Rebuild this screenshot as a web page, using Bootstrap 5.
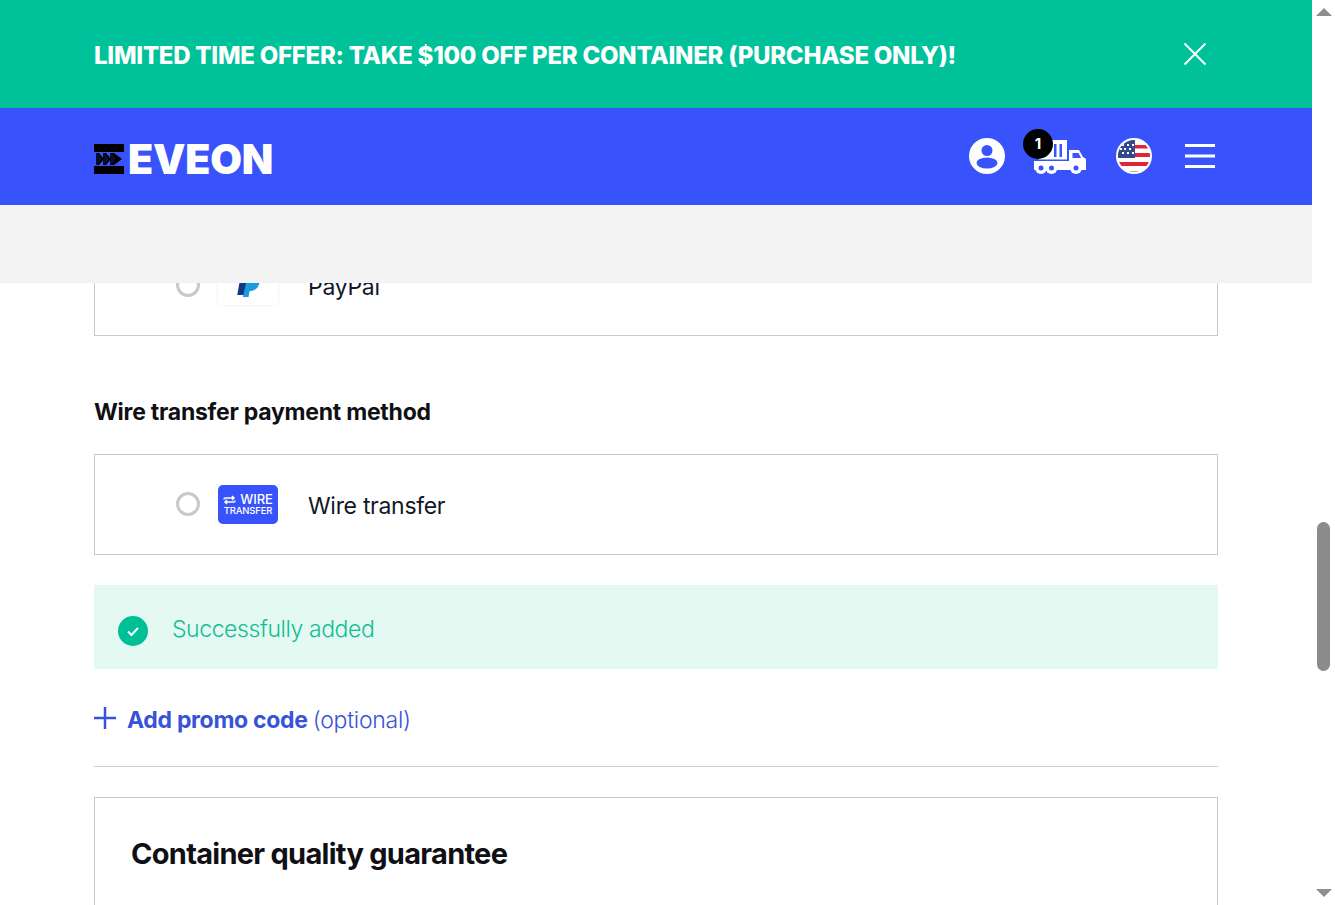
<!doctype html>
<html lang="en">
<head>
<meta charset="utf-8">
<title>Eveon checkout</title>
<link href="https://cdn.jsdelivr.net/npm/bootstrap@5.3.0/dist/css/bootstrap.min.css" rel="stylesheet">
<style>
html,body{height:905px;overflow:hidden;background:#fff;}
body{font-family:Inter,"Liberation Sans",sans-serif;color:#101014;}
.shell{width:1335px;height:905px;}
.viewport{width:1312px;height:905px;position:relative;overflow:hidden;}
.sitehead{position:absolute;top:0;left:0;right:0;z-index:5;}
.promo{height:108px;background:#00c29a;padding:0 105px 0 94px;}
.promo-text{font-size:24px;font-weight:800;letter-spacing:-.26px;color:#fff;margin-top:3px;}
.brandbar{height:97px;background:#3853fb;padding:0 97px 0 94px;}
.greybar{height:78px;background:#f3f3f3;}
.brand-group{margin-top:5px;}
.logo-word{font-size:41px;line-height:1;font-weight:900;letter-spacing:-.2px;color:#fff;margin-left:4px;}
.nav-icons{margin-top:-1px;}
.cart{position:relative;width:52px;height:36px;margin-left:29px;}
.cart-badge{position:absolute;left:-11px;top:-9px;width:30px;height:30px;border-radius:50%;background:#000;color:#fff;font-size:15px;font-weight:700;}
.flag{margin-left:30px;}
.burger{margin-left:33px;}
.content{padding:235px 94px 0;box-sizing:content-box;width:1124px;}
.paybox{height:101px;border:1px solid #c9c9c9;padding-left:81px;}
.radio-ring{width:24px;height:24px;border-radius:50%;border:3px solid #c9c9c9;margin-top:-2px;}
.logo-tile{width:60px;height:39px;border-radius:5px;margin-left:18px;}
.tile-paypal{background:#fff;box-shadow:0 0 3px rgba(0,0,0,.1);}
.tile-wire{background:#3853fb;color:#fff;line-height:1;}
.wire-top{font-size:13px;font-weight:500;letter-spacing:-.1px;}
.wire-bottom{font-size:9.5px;font-weight:500;letter-spacing:-.2px;margin-top:0;}
.method-name{font-size:23px;font-weight:400;letter-spacing:-.3px;margin-left:30px;margin-top:3px;color:#11182a;}
.method-heading{font-size:23px;font-weight:700;letter-spacing:-.25px;margin:62px 0 0;height:56px;line-height:28px;}
.success-box{height:84px;background:#e3f9f2;margin-top:30px;padding-left:24px;}
.success-icon{margin-top:7px;}
.success-text{font-size:23px;font-weight:300;letter-spacing:-.42px;color:#14bd96;margin-left:24px;margin-top:4px;}
.promo-row{height:98px;margin:0;border-bottom:1px solid #cfcfcf;padding-top:5px;color:#3853d8;}
.promo-plus{margin-top:-4px;}
.promo-strong{font-size:23px;font-weight:700;letter-spacing:-.3px;margin-left:11px;}
.promo-light{font-size:23px;font-weight:300;letter-spacing:-.25px;margin-left:5px;}
.guarantee{border:1px solid #c9c9c9;margin-top:30px;height:200px;padding:36px;}
.guarantee-title{font-size:29px;font-weight:700;letter-spacing:-.72px;line-height:40px;margin:0;}
.railbar{width:23px;height:905px;background:#fff;position:relative;}
.rail-thumb{position:absolute;left:5px;top:522px;width:13px;height:149px;border-radius:7px;background:#8b8b8b;}
.rail-up,.rail-down{position:absolute;left:4px;width:0;height:0;border-left:8px solid transparent;border-right:8px solid transparent;}
.rail-up{top:8px;border-bottom:8px solid #8e8e8e;}
.rail-down{bottom:8px;border-top:8px solid #8e8e8e;}
</style>
</head>
<body>
<div class="shell d-flex">
  <div class="viewport">
    <header class="sitehead">
      <div class="promo d-flex align-items-center justify-content-between">
        <div class="promo-text">LIMITED TIME OFFER: TAKE $100 OFF PER CONTAINER (PURCHASE ONLY)!</div>
        <svg width="24" height="24" viewBox="0 0 24 24" fill="none" stroke="#fff" stroke-width="2" aria-label="Close"><path d="M1.500 1.500 22.500 22.500M22.500 1.500 1.500 22.500"/></svg>
      </div>
      <nav class="brandbar d-flex align-items-center justify-content-between">
        <div class="brand-group d-flex align-items-center">
          <svg width="30" height="30" viewBox="0 0 30 30" aria-hidden="true">
            <rect width="30" height="30" fill="#000"/>
            <path fill="#3853fb" d="M0 8H30V22H0Z"/>
            <path fill="#000" d="M2 9H5L10 15 5 21H2L7 15ZM9 9H12L17 15 12 21H9L14 15ZM16 9H20L28 15 20 21H16L21 15Z"/>
            <path fill="#000" d="M2 9 7 15 2 21ZM9 9 14 15 9 21ZM16 9 21 15 16 21Z" opacity=".85"/>
          </svg>
          <span class="logo-word">EVEON</span>
        </div>
        <div class="nav-icons d-flex align-items-center">
          <svg width="36" height="36" viewBox="0 0 36 36" aria-label="Account"><circle cx="18" cy="18" r="18" fill="#fff"/><circle cx="18" cy="12.500" r="5.500" fill="#3853fb"/><ellipse cx="18" cy="25" rx="10.500" ry="5.500" fill="#3853fb"/></svg>
          <div class="cart">
            <svg width="52" height="36" viewBox="0 0 52 36" aria-hidden="true">
              <path fill="#fff" d="M5 2H33V24H5Z"/>
              <path fill="#3853fb" d="M20 6h2.500v13H20zM25.500 6H28v13h-2.500z"/>
              <path fill="#3853fb" d="M5 21.500H33V23H5Z"/>
              <path fill="#fff" d="M35 12H45L49 19 52 21V32H1Q0 32 0 31V23H35Z"/>
              <path fill="#3853fb" d="M38.500 15H44.500L47 20H38.500Z"/>
              <circle cx="7" cy="30" r="6" fill="#fff"/><circle cx="17.500" cy="30" r="6" fill="#fff"/><circle cx="42" cy="30" r="6" fill="#fff"/>
              <circle cx="7" cy="30" r="2.500" fill="#3853fb"/><circle cx="17.500" cy="30" r="2.500" fill="#3853fb"/><circle cx="42" cy="30" r="2.500" fill="#3853fb"/>
            </svg>
            <span class="cart-badge d-flex align-items-center justify-content-center">1</span>
          </div>
          <svg class="flag" width="36" height="36" viewBox="0 0 36 36" aria-label="United States">
            <defs><clipPath id="flagclip"><circle cx="18" cy="18" r="16"/></clipPath></defs>
            <circle cx="18" cy="18" r="18" fill="#fff"/>
            <g clip-path="url(#flagclip)">
              <rect width="36" height="36" fill="#fff"/>
              <path fill="#e0243a" d="M0 7h36v3.500H0zM0 15h36v4H0zM0 24h36v4H0z"/>
              <rect x="0" y="0" width="19" height="20" fill="#2f4a8f"/>
              <path fill="#fff" d="M6 6h2v2H6zM11 6h2v2h-2zM16 6h2v2h-2zM8 10h2v2H8zM13 10h2v2h-2zM4 10h2v2H4zM6 14h2v2H6zM11 14h2v2h-2zM16 14h2v2h-2z"/>
              <rect x="0" y="33" width="36" height="3" fill="#c9a070"/>
            </g>
          </svg>
          <svg class="burger" width="30" height="24" viewBox="0 0 30 24" fill="#fff" aria-label="Menu"><path d="M0 0h30v3H0zM0 10.500h30v3H0zM0 21h30v3H0z"/></svg>
        </div>
      </nav>
      <div class="greybar"></div>
    </header>

    <main class="content">
      <div class="paybox d-flex align-items-center">
        <span class="radio-ring"></span>
        <span class="logo-tile tile-paypal d-flex align-items-center justify-content-center">
          <svg width="27" height="24" viewBox="0 0 24 24" preserveAspectRatio="none" aria-hidden="true"><path fill="#113984" d="M5 2H17C21 2 23 5 22 8 21 12 18 14 14 14H10L9 21H2Z"/><path fill="#1c9be0" d="M10 8H21C22 13 18 17 13 17L12 23H7Z"/></svg>
        </span>
        <span class="method-name">PayPal</span>
      </div>

      <h2 class="method-heading">Wire transfer payment method</h2>

      <div class="paybox d-flex align-items-center">
        <span class="radio-ring"></span>
        <span class="logo-tile tile-wire d-flex flex-column align-items-center justify-content-center">
          <span class="wire-top d-flex align-items-center gap-1">
            <svg width="13" height="10" viewBox="0 0 13 10" fill="none" stroke="#fff" stroke-width="1.500" aria-hidden="true"><path d="M1 4.500V4Q1 3 2.500 3H11M9 1l2 2-2 2M12 5.500V6Q12 7 10.500 7H2M4 5 2 7l2 2"/></svg>WIRE</span>
          <span class="wire-bottom">TRANSFER</span>
        </span>
        <span class="method-name">Wire transfer</span>
      </div>

      <div class="success-box d-flex align-items-center">
        <svg class="success-icon" width="30" height="30" viewBox="0 0 30 30" aria-hidden="true"><circle cx="15" cy="15" r="15" fill="#00bf95"/><path d="M10 15.500 13.500 19 20 12" fill="none" stroke="#fff" stroke-width="2"/></svg>
        <span class="success-text">Successfully added</span>
      </div>

      <div class="promo-row d-flex align-items-center">
        <svg class="promo-plus" width="22" height="22" viewBox="0 0 22 22" fill="none" stroke="#3853d8" stroke-width="2.500" aria-hidden="true"><path d="M11 0V22M0 11H22"/></svg>
        <span class="promo-strong">Add promo code</span><span class="promo-light">(optional)</span>
      </div>

      <section class="guarantee">
        <h2 class="guarantee-title">Container quality guarantee</h2>
      </section>
    </main>
  </div>
  <div class="railbar" aria-hidden="true">
    <div class="rail-up"></div>
    <div class="rail-thumb"></div>
    <div class="rail-down"></div>
  </div>
</div>
<script src="https://cdn.jsdelivr.net/npm/bootstrap@5.3.0/dist/js/bootstrap.bundle.min.js"></script>
</body>
</html>
